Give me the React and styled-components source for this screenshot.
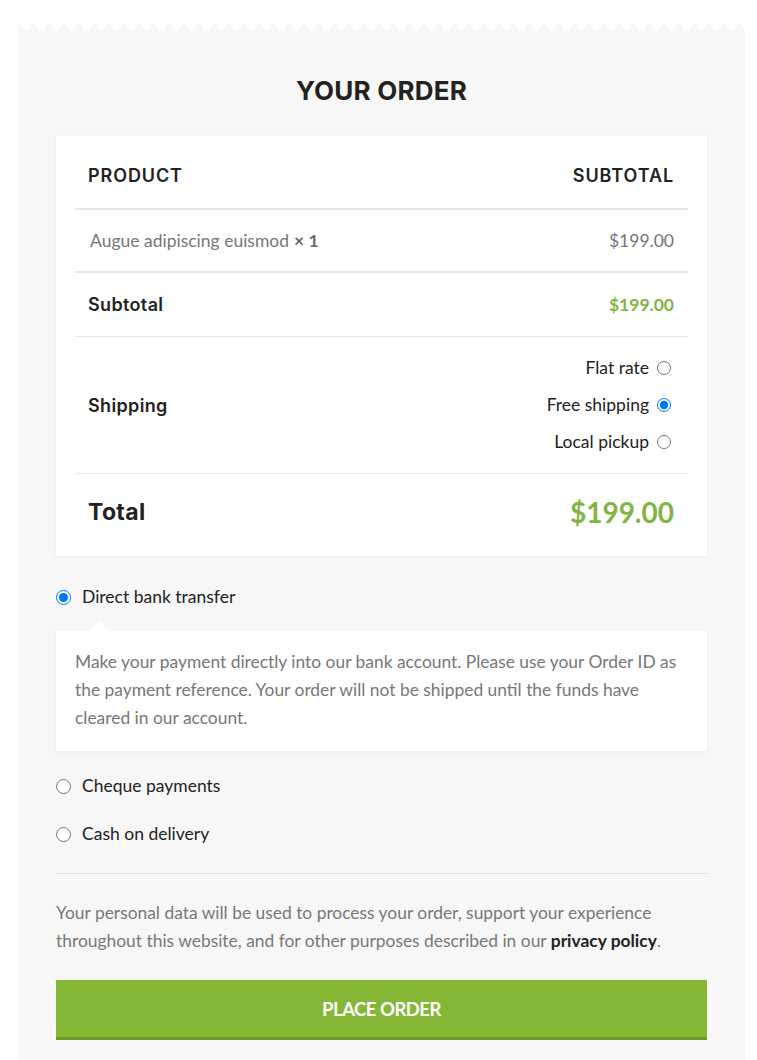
import React from 'react';
import styled, { createGlobalStyle } from 'styled-components';

const GlobalStyle = createGlobalStyle`
  body {
    margin: 0;
    background: #fff;
    font-family: Lato, "Liberation Sans", sans-serif;
  }
`;

const Page = styled.div`
  padding: 23px 12px 0 18px;
`;

const Panel = styled.div`
  position: relative;
  background: #f7f7f7;
  padding: 52px 38px 30px;
  min-height: 1000px;
  &::before {
    content: '';
    position: absolute;
    top: 0;
    left: 0;
    right: 0;
    height: 9px;
    background: radial-gradient(ellipse 5.5px 8px at 50% 0, #fff 92%, transparent 100%);
    background-size: 15px 9px;
    background-position: 1px 0;
  }
`;

const Title = styled.h2`
  margin: 0 0 30px;
  text-align: center;
  font-family: Inter, "DejaVu Sans", sans-serif;
  font-weight: 700;
  font-size: 26px;
  line-height: 31px;
  letter-spacing: 0.2px;
  color: #222;
`;

const Card = styled.div`
  background: #fff;
  padding: 0 19px 6px;
  box-shadow: 0 1px 3px rgba(0, 0, 0, 0.06);
`;

const Row = styled.div`
  display: flex;
  align-items: center;
  justify-content: space-between;
  box-sizing: border-box;
  height: ${p => p.h}px;
  padding: ${p => p.pt || 0}px 14px 0 13px;
  border-bottom: ${p => p.border || 0}px solid #e6e6e6;
`;

const Heading = styled.span`
  font-family: Inter, "DejaVu Sans", sans-serif;
  font-weight: ${p => (p.big ? 700 : 600)};
  font-size: ${p => p.size || 18}px;
  letter-spacing: ${p => (p.upper ? 0.9 : 0.35)}px;
  color: #222;
  text-transform: ${p => (p.upper ? 'uppercase' : 'none')};
`;

const Muted = styled.span`
  font-size: 17.5px;
  color: #777;
  padding-left: ${p => p.pl || 0}px;
  b {
    color: #666;
    margin-left: 5px;
  }
`;

const Price = styled.span`
  font-weight: 700;
  color: #81b441;
  font-size: ${p => p.size || 17.5}px;
`;

const Options = styled.div`
  display: flex;
  flex-direction: column;
  align-items: flex-end;
  gap: 13px;
  margin-right: 3px;
`;

const Option = styled.label`
  display: flex;
  align-items: center;
  gap: 8px;
  font-size: 17.5px;
  line-height: 24px;
  color: #222;
  input {
    margin: 0;
    width: 14px;
    height: 14px;
  }
`;

const Methods = styled.div`
  margin-top: 29px;
`;

const Method = styled.label`
  display: flex;
  align-items: center;
  gap: 11px;
  font-size: 17.5px;
  line-height: 24px;
  color: #222;
  padding-left: 0;
  margin-bottom: ${p => p.mb || 0}px;
  input {
    margin: 0;
    width: 15px;
    height: 15px;
  }
`;

const Box = styled.div`
  position: relative;
  background: #fff;
  margin: 22px 0 23px;
  padding: 17px 19px 19px;
  font-size: 17.4px;
  line-height: 28px;
  color: #777;
  box-shadow: 0 1px 3px rgba(0, 0, 0, 0.05);
  &::before {
    content: '';
    position: absolute;
    top: -10px;
    left: 33px;
    border: 10px solid transparent;
    border-top: 0;
    border-bottom-color: #fff;
  }
  p {
    margin: 0;
  }
`;

const Divider = styled.hr`
  border: 0;
  border-top: 1px solid #e0e0e0;
  margin: 27px 0 25px;
`;

const Note = styled.p`
  margin: 0 0 25px;
  font-size: 17.4px;
  line-height: 28px;
  color: #777;
  a {
    color: #222;
    font-weight: 700;
    text-decoration: none;
  }
`;

const Button = styled.button`
  display: block;
  width: 100%;
  height: 60px;
  border: 0;
  border-bottom: 3px solid #6e9a2c;
  background: #84b736;
  color: #fff;
  font-family: Lato, "Liberation Sans", sans-serif;
  font-weight: 700;
  font-size: 18.5px;
  letter-spacing: -0.5px;
  text-transform: uppercase;
  cursor: pointer;
`;

const shipping = ['Flat rate', 'Free shipping', 'Local pickup'];

export default function App() {
  return (
    <Page>
      <GlobalStyle />
      <Panel>
        <Title>YOUR ORDER</Title>
        <Card>
          <Row h={74} pt={6} border={2}>
            <Heading upper>Product</Heading>
            <Heading upper>Subtotal</Heading>
          </Row>
          <Row h={63} border={2}>
            <Muted pl={2}>Augue adipiscing euismod<b>× 1</b></Muted>
            <Muted>$199.00</Muted>
          </Row>
          <Row h={64} border={1}>
            <Heading>Subtotal</Heading>
            <Price>$199.00</Price>
          </Row>
          <Row h={137} border={1}>
            <Heading>Shipping</Heading>
            <Options>
              {shipping.map(s => (
                <Option key={s}>
                  {s}
                  <input type="radio" name="ship" defaultChecked={s === 'Free shipping'} />
                </Option>
              ))}
            </Options>
          </Row>
          <Row h={76}>
            <Heading big size={23}>Total</Heading>
            <Price size={28}>$199.00</Price>
          </Row>
        </Card>
        <Methods>
          <Method>
            <input type="radio" name="pay" defaultChecked />
            Direct bank transfer
          </Method>
          <Box>
            <p>
              Make your payment directly into our bank account. Please use your Order ID as
              the payment reference. Your order will not be shipped until the funds have
              cleared in our account.
            </p>
          </Box>
          <Method mb={24}>
            <input type="radio" name="pay" />
            Cheque payments
          </Method>
          <Method>
            <input type="radio" name="pay" />
            Cash on delivery
          </Method>
        </Methods>
        <Divider />
        <Note>
          Your personal data will be used to process your order, support your experience
          throughout this website, and for other purposes described in our{' '}
          <a href="#">privacy policy</a>.
        </Note>
        <Button>Place order</Button>
      </Panel>
    </Page>
  );
}
